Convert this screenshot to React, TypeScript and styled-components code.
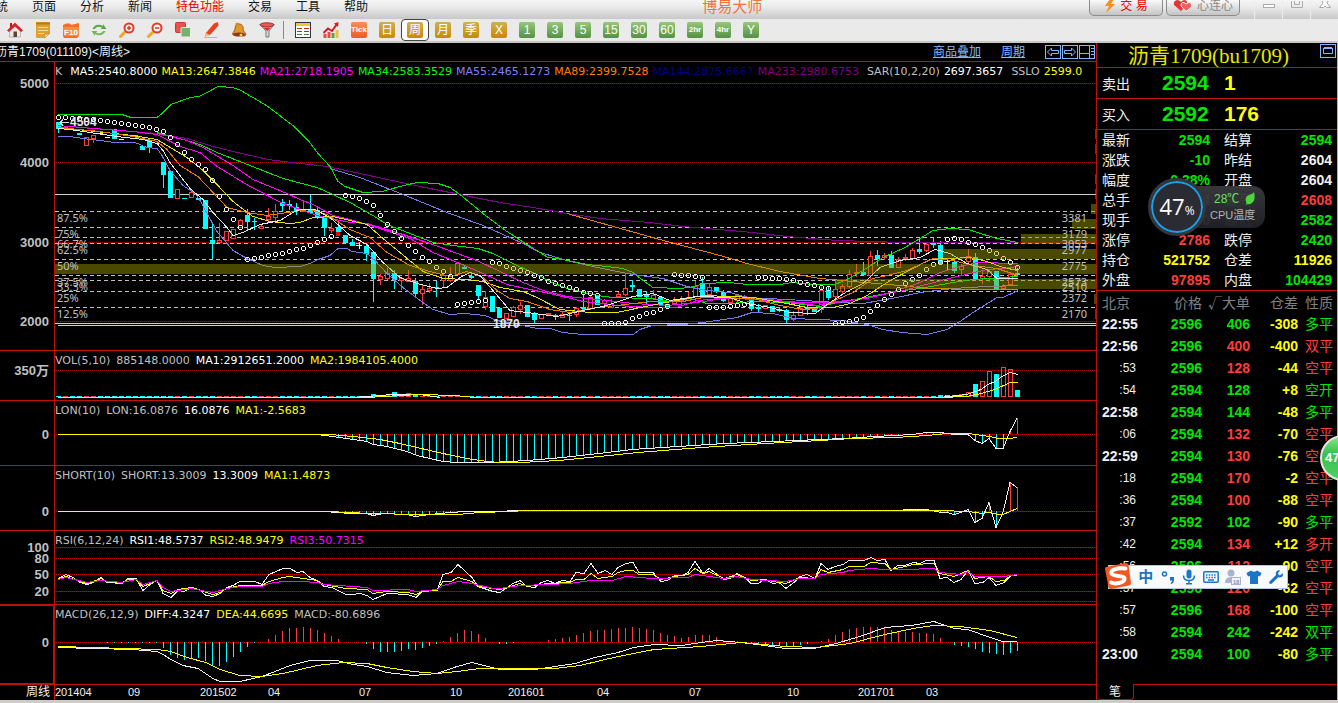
import React from "react";
import styled, { createGlobalStyle, css } from "styled-components";

const RED = "#c01008";
const UP = "#ff3c3c";
const DOWN = "#00ffff";
const GREEN = "#00e600";
const YELLOW = "#ffff00";
const MAGENTA = "#ff00ff";
const GRAY = "#c0c0c0";
const WHITE = "#f0f0f0";
const CJK = '"Noto Sans CJK SC"';

const GlobalStyle = createGlobalStyle`
  * { box-sizing: border-box; }
  body { margin: 0; background: #000; overflow: hidden; }
  button { font: inherit; color: inherit; background: none; border: 0; padding: 0; }
`;

/* ---------- page frame ---------- */

const Page = styled.div`
  display: flex;
  flex-direction: column;
  height: 100vh;
  position: relative;
  overflow: hidden;
  background: #000;
  border-bottom: 3px solid #cfcbc7;
  color: ${WHITE};
  font-family: "Liberation Sans", ${CJK}, sans-serif;
  font-size: 12px;
`;

const MenuBar = styled.header`
  flex: none;
  display: flex;
  height: 19px;
  background: linear-gradient(#f6f6f6, #e9e9e9 40%, #c8c8c8);
  color: #111;
  overflow: hidden;
`;

const Menu = styled.nav`
  display: flex;
  gap: 24px;
  margin-left: -16px;
`;

const MenuItem = styled.button<{ $hot?: boolean }>`
  height: 14px;
  line-height: 14px;
  font-size: 12px;
  white-space: nowrap;
  color: ${(p) => (p.$hot ? "#f00000" : "#111")};
`;

const Brand = styled.h1`
  margin: 0 auto 0 334px;
  font-size: 15px;
  font-weight: 400;
  line-height: 14px;
  color: #f4703c;
`;

const BarButtons = styled.div`
  display: flex;
  gap: 3px;
  margin-right: 14px;
`;

const BarButton = styled.button<{ $tone: string }>`
  display: flex;
  align-items: center;
  justify-content: center;
  gap: 4px;
  width: 74px;
  height: 16px;
  padding-bottom: 4px;
  border: 1px solid #8c8c8c;
  border-top: 0;
  border-radius: 0 0 5px 5px;
  background: linear-gradient(#fafafa, #c4c4c4);
  color: ${(p) => p.$tone};
  font-size: 12px;
  line-height: 12px;
`;

const WindowButtons = styled.div`
  display: flex;
  width: 84px;
  height: 19px;
`;

const WindowButton = styled.button`
  flex: 1;
  padding-bottom: 8px;
  border-left: 1px solid #ececec;
  line-height: 0;
`;

const ToolBar = styled.div`
  flex: none;
  display: flex;
  height: 24px;
  padding-left: 1px;
  background: #eaeaea;
  border-bottom: 2px solid #cbc7c3;
`;

const ToolButton = styled.button<{ $active?: boolean }>`
  display: flex;
  align-items: center;
  justify-content: center;
  width: 28px;
  height: 22px;
  ${(p) =>
    p.$active &&
    css`
      border: 1px solid #444;
      border-radius: 4px;
      background: #fff;
    `}
`;

const ToolDivider = styled.span`
  width: 6px;
  height: 18px;
  margin: 2px 0 0 2px;
  border-left: 1px solid #888;
`;

const Chip = styled.span<{ $tone: "gold" | "green" | "orange" }>`
  width: 16px;
  height: 16px;
  border-radius: 2px;
  color: #fff;
  font-size: 12px;
  line-height: 16px;
  text-align: center;
  white-space: nowrap;
  background: ${(p) =>
    p.$tone === "gold"
      ? "linear-gradient(#d0b050, #cc8800)"
      : p.$tone === "green"
      ? "linear-gradient(#96c878, #549044)"
      : "linear-gradient(#f59058, #ee5a1c)"};
`;

const ChipSmall = styled.span`
  display: block;
  font-size: 8px;
  font-weight: 700;
`;

const Main = styled.main`
  flex: 1;
  min-height: 0;
  display: grid;
  grid-template-columns: minmax(0, 1fr) 242px;
`;

/* ---------- chart side ---------- */

const Charts = styled.section`
  display: grid;
  grid-template-rows:
    18px minmax(0, 289fr) minmax(0, 50fr) minmax(0, 65fr) minmax(0, 65fr)
    minmax(0, 74fr) minmax(0, 80fr) 16px;
  min-width: 0;
`;

const ChartTitle = styled.div`
  display: flex;
  align-items: center;
  height: 18px;
  overflow: hidden;
`;

const Symbol = styled.h2`
  flex: 1;
  margin: 0 0 0 -5px;
  font-size: 12px;
  font-weight: 400;
  line-height: 18px;
  white-space: nowrap;
`;

const TitleLink = styled.a`
  margin-right: 20px;
  color: #80b8ff;
  line-height: 18px;
  text-decoration: underline;
`;

const IconButtons = styled.div`
  display: flex;
  gap: 1px;
  padding-right: 1px;
`;

const IconButton = styled.button`
  width: 16px;
  height: 14px;
  line-height: 0;
`;

const Panel = styled.div`
  display: grid;
  grid-template-columns: 54px minmax(0, 1fr);
  grid-template-rows: minmax(0, 1fr);
  border-top: 1px solid ${RED};
`;

const Axis = styled.div<{ $active?: boolean }>`
  position: relative;
  ${(p) =>
    p.$active &&
    css`
      box-shadow: inset 0 1px ${RED}, inset -1px 0 ${RED}, inset 0 -1px ${RED};
    `}
`;

const AxisLabel = styled.span`
  position: absolute;
  right: 5px;
  height: 16px;
  margin-top: -8px;
  color: ${GRAY};
  font-size: 13px;
  font-weight: 700;
  line-height: 16px;
`;

const Plot = styled.div`
  position: relative;
  border-left: 1px solid ${RED};
  overflow: hidden;
`;

const Canvas = styled.svg`
  position: absolute;
  inset: 0;
  width: 100%;
  height: 100%;
`;

const Legend = styled.div<{ $tight?: boolean }>`
  position: relative;
  display: flex;
  gap: ${(p) => (p.$tight ? 4 : 6)}px;
  height: 20px;
  font-family: "DejaVu Sans", ${CJK}, sans-serif;
  font-size: 11px;
  line-height: 20px;
  white-space: nowrap;
`;

const LegendItem = styled.span<{ $color: string; $wide?: boolean }>`
  color: ${(p) => p.$color};
  margin-right: ${(p) => (p.$wide ? 4 : 0)}px;
`;

const LevelLabel = styled.span<{ $side: "left" | "right" }>`
  position: absolute;
  ${(p) => (p.$side === "left" ? "left: 2px" : "right: 9px")};
  height: 14px;
  margin-top: -7px;
  color: ${GRAY};
  font-family: "Noto Sans", sans-serif;
  font-size: 11px;
  line-height: 14px;
`;

const PriceMark = styled.span`
  position: absolute;
  height: 14px;
  margin-top: -7px;
  font-size: 12px;
  font-weight: 700;
  line-height: 14px;
  color: #e8e8e8;
`;

const TimeRow = styled.div`
  display: grid;
  grid-template-columns: 54px minmax(0, 1fr);
  border-top: 1px solid ${RED};
  line-height: 15px;
`;

const TimeUnit = styled.span`
  padding-right: 4px;
  text-align: right;
`;

const TimeTicks = styled.div`
  position: relative;
  border-left: 1px solid ${RED};
`;

const TimeTick = styled.span`
  position: absolute;
  top: 0;
  font-size: 11px;
`;

/* ---------- quote side ---------- */

const Quote = styled.aside`
  display: flex;
  flex-direction: column;
  border-left: 1px solid ${RED};
  border-right: 1px solid #b8b4b0;
  font-size: 14px;
`;

const QuoteTitle = styled.div`
  display: flex;
  justify-content: flex-end;
  height: 25px;
  padding: 1px 1px 0 0;
  border-bottom: 1px solid ${RED};
`;

const QuoteName = styled.h2`
  flex: 1;
  margin: 0;
  color: #e6e600;
  font-family: "Liberation Serif", ${CJK}, serif;
  font-size: 21px;
  font-weight: 400;
  line-height: 24px;
  text-align: center;
  white-space: nowrap;
`;

const Side = styled.div`
  display: grid;
  grid-template-columns: 60px 62px 1fr;
  align-items: center;
  height: 31px;
  padding-left: 5px;
  border-bottom: 1px solid ${RED};
`;

const Big = styled.span<{ $color: string }>`
  color: ${(p) => p.$color};
  font-size: 21px;
  font-weight: 700;
`;

const QuoteTable = styled.table`
  width: 100%;
  height: 161px;
  table-layout: fixed;
  border-collapse: separate;
  border-spacing: 0;
  border-bottom: 1px solid ${RED};

  tr { height: 20px; }
  th, td { padding: 0; font-size: 14px; line-height: 20px; height: 20px; white-space: nowrap; }
  th { font-weight: 400; text-align: left; }
`;

const Num = styled.td<{ $color: string }>`
  color: ${(p) => p.$color};
  font-weight: 700;
  text-align: right;
`;

const Tape = styled.table`
  width: 100%;
  table-layout: fixed;
  border-collapse: collapse;

  th, td { height: 22px; padding: 0; font-size: 14px; line-height: 22px; text-align: right; white-space: nowrap; }
  th { color: #808080; font-family: ${CJK}, sans-serif; font-weight: 400; }
  th:first-child, td:first-child { padding-left: 5px; }
  th:last-child, td:last-child { padding-right: 4px; }
  th:first-child { text-align: left; }
`;

const TimeCell = styled.td<{ $minor: boolean }>`
  ${(p) =>
    p.$minor
      ? css`
          && { font-size: 12px; padding-right: 2px; }
        `
      : css`
          && { font-weight: 700; text-align: left; }
        `}
`;

const Kind = styled.td<{ $color: string }>`
  color: ${(p) => p.$color};
`;

const Tabs = styled.div`
  display: flex;
  height: 16px;
  margin-top: auto;
`;

const Tab = styled.button`
  width: 37px;
  border: 1px solid ${RED};
  border-width: 0 1px 1px 0;
  border-radius: 0 0 4px 4px;
  font-size: 12px;
  line-height: 14px;
`;

const TabFill = styled.div`
  flex: 1;
  border-top: 1px solid ${RED};
`;

/* ---------- floating widgets ---------- */

const CpuWidget = styled.div`
  position: absolute;
  top: 178px;
  right: 73px;
  display: flex;
  align-items: center;
  width: 117px;
  height: 58px;
`;

const CpuRing = styled.div`
  position: relative;
  display: flex;
  align-items: baseline;
  justify-content: center;
  width: 58px;
  height: 58px;
  border: 3px solid #33363c;
  border-radius: 50%;
  background: #2a2b33;
  box-shadow: inset 0 0 0 2px #1ca0e8;
  color: #fff;
  font-family: "Open Sans", sans-serif;
  font-size: 22px;
  line-height: 50px;
`;

const Percent = styled.span`
  font-size: 12px;
`;

const CpuInfo = styled.div`
  flex: 1;
  height: 42px;
  margin-left: -12px;
  padding: 5px 0 0 16px;
  border-radius: 0 12px 12px 0;
  background: linear-gradient(rgba(58, 58, 62, 0.96), rgba(32, 33, 40, 0.96));
  color: #b4b4b4;
  font-size: 11px;
  line-height: 16px;
  white-space: nowrap;
`;

const Temp = styled.div`
  display: flex;
  align-items: center;
  gap: 6px;
  padding-left: 4px;
  color: #6ce060;
  font-size: 12px;
`;

const Ball = styled.div`
  position: absolute;
  top: 435px;
  right: -28px;
  width: 46px;
  height: 46px;
  padding-left: 3px;
  border: 2px solid #e0e8e0;
  border-radius: 50%;
  background: linear-gradient(#88e488, #38c050 40%, #50d060);
  color: #fff;
  font-size: 13px;
  font-weight: 700;
  line-height: 42px;
`;

const ImeBar = styled.div`
  position: absolute;
  top: 565px;
  right: 50px;
  display: flex;
  align-items: center;
  width: 180px;
  height: 24px;
  padding-left: 26px;
  border: 1px solid #b4c8dc;
  background: #f8fafc;
  color: #1c74c4;
`;

const ImeLogo = styled.svg`
  position: absolute;
  left: -6px;
  top: -5px;
`;

const ImeButton = styled.button`
  width: 22px;
  height: 22px;
  font-size: 15px;
  font-weight: 700;
  line-height: 0;
`;

/* ---------- chart data ---------- */

type Pt = [number, number];
const parse = (s: string): Pt[] => s.trim().split(/\s+/).map((p) => p.split(",").map(Number) as Pt);
const barX = (n: number) => 58 + 7 * n;

const valueAt = (pts: Pt[], x: number) => {
  for (let i = 1; i < pts.length; i++) {
    if (x <= pts[i][0]) {
      const [x0, y0] = pts[i - 1];
      const [x1, y1] = pts[i];
      return y0 + ((y1 - y0) * (x - x0)) / (x1 - x0);
    }
  }
  return pts[pts.length - 1][1];
};

const averages: [string, string][] = [
  ["#800090", "58,125 157,133 187,138 213,146 233,151 268,159 300,163 327,166 360,173 383,178 420,186 460,194 500,202 533,207 567,213 600,218 650,222 683,226 730,230 753,232 787,236 837,240 870,241 903,242 1018,242"],
  ["#7878e8", "330,168 360,177 403,194 447,212 483,225 523,243 540,252 567,260 597,267 633,274 663,278 687,286 707,290 730,292 747,297 787,299 837,302 863,303 897,297 920,292 953,288 987,286 1018,285"],
  ["#7878e8", "58,136 70,136 83,138 100,140 115,142 135,142 147,147 157,148 162,155 170,170 183,185 195,193 200,200 217,231 233,250 247,258 263,265 275,267 300,266 310,263 318,259 330,255 338,248 347,248 352,251 367,253 375,260 387,273 403,287 420,300 433,309 450,314 465,313 485,315 497,320 507,322 523,325 537,328 550,328 563,332 583,334 607,334 633,334 640,329 652,325 683,324 703,322 737,317 752,312 773,313 793,318 817,319 843,320 867,324 883,329 902,332 927,334 947,329 960,321 973,312 997,297 1003,297 1018,290"],
  ["#00e600", "58,114 122,114 131,117 157,117 162,113 171,104 190,97 199,96 207,92 218,86 233,87 241,90 268,106 294,126 309,141 318,153 330,166 338,181 345,186 363,192 382,191 400,186 417,182 438,183 450,187 460,194 483,213 507,231 527,244 548,257 563,259 587,264 607,266 623,268 633,272 643,280 653,287 680,288 695,286 703,283 730,282 747,284 780,284 792,282 813,284 835,284 847,279 863,270 883,257 905,247 920,238 933,230 950,228 968,229 987,235 997,238 1018,242"],
  ["#00e600", "157,132 183,139 200,144 217,152 250,165 283,178 317,187 333,194 350,202 373,215 387,224 410,233 433,242 453,245 478,248 493,253 517,265 537,274 550,281 567,288 597,295 613,297 650,298 670,301 690,298 707,303 730,303 753,301 787,302 820,306 837,302 860,298 897,291 920,288 953,282 973,279 1018,276"],
  ["#e88000", "567,213 617,227 667,241 720,255 747,263 780,271 820,278 853,281 900,285 927,288 973,289 1018,289"],
  ["#ff00ff", "58,125 93,128 133,131 157,134 180,146 200,152 217,166 250,186 283,203 317,215 350,222 367,223 400,233 433,244 460,254 477,260 500,271 523,282 543,290 567,296 597,299 633,303 667,305 697,302 730,297 753,299 803,302 837,302 870,297 907,289 953,277 987,269 1003,268 1018,266"],
  ["#ff00ff", "157,133 187,140 203,147 233,165 253,179 287,193 300,199 313,204 333,215 350,219 377,227 410,238 433,252 460,263 483,273 507,284 530,289 550,293 583,301 617,305 650,307 677,307 697,300 720,298 770,299 817,305 837,301 867,298 897,290 920,282 940,272 960,266 977,262 1018,263"],
  ["#e6e600", "58,127 133,135 157,139 167,145 187,157 203,170 217,184 233,201 253,216 270,221 290,223 300,222 313,217 333,216 350,220 367,224 383,238 400,252 423,271 443,278 467,279 483,281 500,287 523,291 537,297 560,309 590,312 617,312 650,305 677,300 703,295 730,296 753,297 787,303 807,307 833,307 850,303 867,295 887,282 907,271 930,259 970,257 987,261 1003,267 1018,270"],
  ["#f07800", "58,127 100,131 133,136 157,141 167,149 180,165 198,176 213,192 227,207 247,212 267,215 287,212 310,209 327,214 350,229 370,237 387,252 410,265 430,271 450,276 467,271 483,277 497,290 510,298 527,301 550,309 570,312 590,308 617,305 650,301 683,301 703,297 753,298 780,305 803,309 823,307 837,299 853,292 873,278 887,275 907,270 933,258 953,260 973,265 997,268 1018,275"],
  ["#e8e8e8", "58,128 70,129 90,132 117,136 143,139 157,143 163,150 170,162 190,188 203,199 213,212 227,227 233,235 243,232 260,224 280,220 293,212 300,209 315,209 330,217 350,235 367,244 383,262 400,277 417,283 437,288 447,287 460,277 470,272 480,275 493,290 510,310 527,312 557,316 583,310 607,305 633,296 653,293 670,300 697,296 730,297 747,303 770,307 790,312 815,313 830,302 847,291 863,283 880,267 900,260 920,257 935,249 950,253 967,263 987,269 997,278 1018,278"],
];

const sarRuns: [number, number[]][] = [
  [0, [117, 117, 118, 118, 119, 119, 120, 121, 122, 123, 124, 125, 126, 127, 129, 131, 137, 144, 152, 159, 164, 169, 180, 196, 209, 219, 227]],
  [27, [259, 258, 257, 255, 254, 253, 251, 249, 248, 245, 242, 239, 236]],
  [41, [195, 196, 198, 201, 205, 215, 224, 231, 238, 245, 251, 257, 261, 267, 271, 276]],
  [57, [304, 303, 302, 301, 300]],
  [62, [262, 263, 266, 268, 270, 272, 275, 277, 281, 283, 285, 287, 289, 292, 293, 295]],
  [78, [323, 323, 323, 322, 318, 316, 313, 312, 309, 306]],
  [88, [274, 275, 275, 276, 277]],
  [93, [307, 307, 307, 306, 305, 304, 303]],
  [100, [277, 277, 278, 278, 279, 280, 282, 284, 285, 287, 288]],
  [111, [323, 322, 321, 319, 317, 311, 305, 299, 294, 289, 283, 279, 275, 269, 264, 262]],
  [127, [239, 238, 239, 242, 244, 247, 250, 253, 258, 262, 267]],
];

/* index, body top, body bottom, high, low, rising */
type Candle = [number, number, number, number, number, 0 | 1];
const candles: Candle[] = [
  [0, 122, 129, 122, 133, 0], [1, 127, 128, 127, 128, 1], [3, 133, 135, 133, 135, 0], [4, 137, 145, 137, 145, 1],
  [5, 135, 138, 135, 143, 1], [8, 129, 139, 129, 139, 0], [11, 135, 137, 135, 137, 0], [12, 146, 150, 146, 150, 0],
  [13, 140, 148, 140, 153, 0], [15, 162, 175, 162, 188, 0], [16, 171, 198, 171, 198, 0], [17, 189, 198, 189, 199, 1],
  [18, 198, 199, 198, 199, 0], [19, 192, 197, 189, 197, 1], [20, 198, 200, 198, 200, 0], [21, 200, 229, 200, 229, 0],
  [22, 240, 244, 222, 259, 0], [23, 240, 242, 223, 243, 1], [24, 231, 240, 231, 240, 1], [25, 229, 238, 229, 238, 1],
  [26, 220, 227, 219, 228, 1], [27, 215, 222, 209, 231, 0], [28, 221, 222, 218, 230, 0], [29, 226, 228, 224, 229, 1],
  [30, 216, 219, 208, 223, 1], [31, 211, 217, 204, 222, 1], [32, 202, 206, 199, 212, 0], [33, 204, 206, 200, 210, 0],
  [34, 207, 211, 203, 215, 0], [35, 209, 211, 201, 212, 1], [36, 209, 213, 195, 213, 0], [37, 210, 217, 208, 219, 0],
  [38, 217, 228, 217, 236, 0], [39, 228, 230, 223, 233, 1], [40, 227, 232, 223, 234, 0], [41, 235, 243, 235, 243, 0],
  [42, 242, 246, 239, 246, 0], [44, 246, 254, 243, 261, 0], [45, 252, 279, 252, 302, 0], [46, 276, 279, 274, 285, 1],
  [47, 273, 278, 268, 280, 1], [48, 273, 280, 270, 289, 0], [49, 278, 280, 277, 290, 1], [50, 278, 281, 270, 281, 1],
  [51, 281, 294, 278, 296, 0], [52, 289, 293, 284, 305, 1], [53, 288, 290, 283, 293, 1], [54, 287, 288, 281, 297, 0],
  [55, 275, 280, 273, 288, 1], [56, 276, 280, 267, 282, 1], [57, 263, 274, 262, 275, 1], [58, 267, 269, 265, 269, 0],
  [59, 276, 278, 274, 279, 0], [60, 285, 296, 285, 299, 0], [61, 297, 306, 291, 310, 1], [62, 296, 312, 296, 312, 0],
  [63, 308, 318, 308, 318, 0], [64, 313, 318, 313, 319, 1], [65, 307, 316, 306, 317, 1], [66, 305, 309, 302, 314, 1],
  [67, 305, 317, 305, 317, 0], [68, 313, 320, 312, 323, 0], [69, 314, 318, 314, 319, 1], [70, 313, 314, 313, 315, 1],
  [71, 315, 317, 314, 320, 0], [72, 314, 317, 312, 318, 1], [73, 315, 316, 312, 321, 0], [74, 308, 314, 307, 317, 1],
  [75, 307, 309, 295, 312, 0], [76, 297, 308, 295, 310, 1], [77, 295, 305, 295, 305, 0], [78, 300, 303, 299, 303, 1],
  [79, 304, 307, 299, 308, 1], [80, 294, 296, 292, 296, 1], [81, 288, 294, 274, 296, 1], [82, 285, 287, 280, 291, 0],
  [83, 289, 297, 289, 297, 0], [84, 295, 297, 292, 304, 0], [85, 295, 298, 290, 299, 1], [86, 297, 305, 297, 305, 0],
  [87, 304, 308, 304, 308, 0], [88, 300, 303, 297, 304, 1], [89, 300, 301, 296, 304, 1], [90, 297, 300, 292, 301, 1],
  [91, 286, 296, 281, 297, 1], [92, 283, 295, 277, 295, 0], [93, 287, 294, 284, 297, 1], [94, 287, 292, 287, 293, 0],
  [95, 292, 301, 290, 302, 0], [96, 298, 302, 298, 304, 1], [97, 295, 300, 294, 303, 1], [98, 296, 298, 295, 299, 1],
  [99, 297, 309, 297, 311, 0], [100, 307, 309, 304, 313, 0], [101, 305, 308, 305, 309, 1], [102, 306, 312, 306, 312, 0],
  [103, 309, 311, 307, 312, 0], [104, 310, 320, 309, 323, 0], [105, 315, 319, 311, 321, 1], [106, 308, 315, 306, 316, 1],
  [107, 308, 310, 305, 315, 0], [108, 308, 312, 307, 312, 0], [109, 290, 309, 287, 313, 1], [110, 290, 298, 286, 300, 0],
  [111, 289, 296, 280, 300, 1], [112, 286, 291, 284, 295, 1], [113, 274, 286, 270, 288, 1], [114, 272, 273, 264, 277, 1],
  [115, 272, 275, 262, 276, 0], [116, 256, 275, 251, 279, 1], [117, 255, 259, 250, 266, 0], [118, 255, 257, 253, 260, 1],
  [119, 255, 268, 251, 268, 0], [120, 259, 267, 257, 268, 1], [121, 257, 258, 254, 261, 1], [122, 250, 258, 248, 258, 1],
  [123, 249, 252, 238, 254, 0], [124, 244, 250, 242, 252, 1], [125, 243, 245, 237, 248, 0], [126, 245, 264, 241, 265, 0],
  [128, 262, 271, 259, 273, 0], [129, 266, 269, 264, 276, 1], [130, 256, 261, 249, 263, 1], [131, 257, 279, 253, 281, 0],
  [132, 276, 278, 271, 284, 1], [133, 271, 276, 269, 282, 1], [134, 271, 289, 271, 289, 0], [135, 286, 288, 284, 290, 1],
  [136, 274, 284, 273, 285, 1], [137, 273, 275, 268, 275, 0],
];

const bands: Pt[] = [
  [1095, 129], [1095, 144], [1095, 174], [1095, 189], [1091, 204], [1072, 219], [1021, 234], [944, 249],
  [55, 264], [835, 279], [1094, 294], [1095, 309],
];

const levels: [number, string, string][] = [
  [218, "87.5%", "3381"], [234, "75%", "3179"], [244, "66.7%", "3053"], [250, "62.5%", "2977"], [266, "50%", "2775"],
  [282, "37.5%", "2573"], [287, "33.3%", "2510"], [298, "25%", "2372"], [314, "12.5%", "2170"],
];

const lonLine = "58,434 317,434 333,436 353,439 367,441 373,444 387,446 407,451 417,455 430,458 443,461 457,462 490,462 510,461 527,460 563,457 599,453 632,449 678,446 725,443 773,441 820,439 844,438 875,436 913,434 927,432 941,432 954,434 968,434 975,440 982,443 989,438 996,448 1003,448 1010,431 1017,418";
const lonAverage = "58,434 330,434 353,436 380,439 400,443 417,447 443,453 467,458 487,461 500,462 520,462 559,460 599,456 638,452 701,447 765,443 820,440 852,438 895,437 927,435 947,433 968,433 990,436 998,438 1010,438 1017,437";
const shortLine = "58,511 325,511 350,513 367,513 373,515 383,513 407,514 415,516 430,514 450,512 467,511 500,511 515,510 880,510 927,509 941,512 947,512 954,514 961,512 968,509 975,522 982,518 989,502 996,527 1003,512 1010,482 1017,487";
const shortAverage = "58,511 325,511 350,512 367,513 420,514 457,514 480,512 510,511 527,510 940,510 968,511 982,513 989,512 998,514 1003,514 1010,511 1017,508";
const rsi1 = "58,578 66,574 73,577 80,582 87,584 93,582 101,577 107,582 122,583 128,578 136,578 143,590 150,584 157,580 163,593 171,597 178,590 184,591 192,587 199,589 206,595 213,596 220,593 227,587 233,585 240,581 255,581 262,584 269,574 276,571 283,568 290,568 297,572 303,571 310,577 317,580 324,586 332,587 346,594 353,594 360,593 367,595 373,599 387,593 408,594 416,597 422,591 437,590 443,574 451,572 458,564 472,577 478,586 493,591 500,592 513,583 520,580 527,586 535,587 541,582 548,580 555,583 562,580 570,581 576,572 584,573 591,563 598,573 605,570 612,574 618,567 626,563 633,562 639,572 653,572 661,581 667,580 675,575 682,575 688,572 695,561 703,573 709,568 716,573 724,579 730,578 737,573 745,577 751,583 758,583 765,579 773,583 779,582 786,588 794,582 800,576 807,574 815,578 821,563 828,569 835,566 843,564 849,560 864,560 871,557 877,560 885,559 891,570 898,565 905,565 913,562 920,563 926,560 934,560 940,578 947,577 954,582 961,579 968,570 975,583 983,582 989,577 996,585 1004,582 1011,575 1017,574";
const rsi2 = "58,578 66,576 80,581 87,583 101,578 107,581 122,582 128,579 136,579 143,586 150,583 157,580 163,590 171,593 178,589 192,587 206,592 213,594 220,592 227,588 240,585 262,585 269,581 283,577 290,576 303,578 317,580 324,584 346,588 367,589 373,593 387,591 408,592 416,594 422,591 437,590 443,581 451,581 458,577 472,581 478,586 500,589 520,583 527,586 548,583 570,582 576,579 584,579 591,573 598,578 612,576 618,572 626,570 633,570 639,574 653,574 661,579 675,576 688,574 695,568 703,573 709,571 724,578 737,574 751,580 765,579 773,581 786,583 800,577 815,578 821,569 828,572 843,569 849,566 864,566 871,562 885,563 891,569 905,566 913,564 934,563 940,573 954,576 968,570 975,578 989,576 996,581 1004,580 1011,575 1017,575";
const rsi3 = "58,579 66,577 87,582 101,580 122,582 136,579 143,584 157,580 163,587 171,591 192,588 206,591 213,592 227,588 240,586 262,586 269,583 283,581 303,581 317,582 324,584 367,587 373,590 408,589 416,591 437,589 443,585 458,581 472,583 493,588 500,588 520,585 548,584 570,583 584,581 591,580 612,580 626,576 653,578 688,577 695,574 724,578 737,576 751,579 786,581 800,578 815,578 821,574 843,572 849,570 871,568 885,569 905,569 934,568 940,572 961,574 968,571 975,576 1004,576 1017,574";
const diff = "58,647 93,648 133,649 157,651 163,654 171,659 183,665 198,668 213,678 220,681 240,681 262,676 275,671 290,665 310,660 337,660 353,664 367,666 387,672 413,675 437,673 457,666 472,662 500,669 535,669 555,666 575,663 595,657 618,652 634,647 654,644 682,645 701,642 717,640 741,642 757,644 786,648 814,648 836,643 860,636 885,627 911,625 934,621 954,628 968,629 990,637 1003,641 1017,641";
const dea = "58,646 93,647 157,649 171,651 187,657 206,662 220,669 240,675 262,676 283,673 300,669 317,665 343,662 367,663 387,667 413,671 437,673 457,671 480,668 510,668 555,668 580,665 618,656 634,653 654,649 701,646 741,642 786,646 817,647 850,643 885,634 913,628 934,625 960,626 990,630 1017,637";
const macdBars = "58,0 150,-1 157,-1 163,-6 171,-14 178,-16 185,-18 192,-17 199,-16 206,-19 213,-24 220,-24 227,-19 233,-15 240,-10 247,-5 255,-1 262,0 269,4 276,8 283,11 290,14 304,15 317,12 324,9 331,6 338,3 345,0 360,0 367,-2 374,-8 381,-10 395,-10 409,-7 416,-8 430,-4 444,1 451,6 458,10 465,12 472,11 479,8 486,3 493,0 500,-2 507,-2 520,0 541,0 555,3 570,5 591,11 612,13 633,15 653,12 661,8 682,4 695,7 709,7 724,2 745,0 760,-3 794,-4 801,-3 815,0 828,3 836,7 850,13 864,15 885,15 891,12 905,10 934,8 941,3 947,0 954,-3 968,-5 982,-10 1003,-13 1017,-9";

const volumes: Record<number, number> = {
  45: 394, 46: 395, 47: 395, 48: 392, 49: 395, 50: 393, 51: 395, 126: 395, 127: 395, 128: 395, 129: 394, 130: 392,
  131: 384, 132: 381, 133: 371, 134: 374, 135: 367, 136: 369, 137: 390,
};

const ticks: [number, string][] = [
  [55, "201404"], [128, "09"], [200, "201502"], [268, "04"], [359, "07"], [450, "10"], [508, "201601"],
  [597, "04"], [689, "07"], [787, "10"], [858, "201701"], [926, "03"],
];

/* ---------- chart parts ---------- */

const Line = ({ pts, color }: { pts: string; color: string }) => (
  <polyline points={pts} fill="none" stroke={color} strokeWidth={1} transform="translate(0 .5)" />
);

const Dots = ({ y, color = "#c00000" }: { y: number; color?: string }) => (
  <line x1={56} x2={1096} y1={y + 0.5} y2={y + 0.5} stroke={color} strokeDasharray="1 1" />
);

const Stems = ({ pts, base, from = 0 }: { pts: string; base: number; from?: number }) => {
  const curve = parse(pts);
  return (
    <>
      {Array.from({ length: 138 - from }, (_, i) => {
        const x = barX(i + from);
        const y = Math.round(valueAt(curve, x));
        if (y === base) return null;
        return <rect key={x} x={x} y={Math.min(y, base)} width={1} height={Math.abs(y - base)} fill={y > base ? DOWN : UP} />;
      })}
    </>
  );
};

interface PanelProps {
  top: number;
  height: number;
  labels: [number, string][];
  legend: [string, string, boolean?][];
  active?: boolean;
  tight?: boolean;
  extra?: React.ReactNode;
  children: React.ReactNode;
}

const pct = (y: number, top: number, height: number) => `${((y - top) / height) * 100}%`;

const ChartPanel = ({ top, height, labels, legend, active, tight, extra, children }: PanelProps) => (
  <Panel>
    <Axis $active={active}>
      {labels.map(([y, text]) => (
        <AxisLabel key={text} style={{ top: pct(y, top, height) }}>{text}</AxisLabel>
      ))}
    </Axis>
    <Plot>
      <Canvas viewBox={`55 ${top} 1041 ${height}`} preserveAspectRatio="none" shapeRendering="crispEdges" aria-hidden="true">
        {children}
      </Canvas>
      {extra}
      <Legend $tight={tight}>
        {legend.map(([text, color, wide]) => (
          <LegendItem key={text} $color={color} $wide={wide}>{text}</LegendItem>
        ))}
      </Legend>
    </Plot>
  </Panel>
);

const PriceDrawing = () => (
  <>
    {[83, 162, 242, 321].map((y) => <Dots key={y} y={y} color="#a00000" />)}
    {[211, 227, 237, 243, 259, 275, 280, 291, 307].map((y) => (
      <line key={y} x1={55} x2={1096} y1={y + 0.5} y2={y + 0.5} stroke={GRAY} strokeDasharray="4 3" />
    ))}
    {[194, 323, 325].map((y) => (
      <rect key={y} x={y === 325 ? 58 : 55} y={y} width={1041} height={1} fill="#d0d0d0" />
    ))}
    {candles.map(([n, t, b, hi, lo, up]) => {
      const x = barX(n);
      return up ? (
        <g key={n}>
          <path d={`M${x + 0.5} ${hi}V${t}M${x + 0.5} ${b}V${lo}`} stroke={UP} />
          <rect x={x - 1.5} y={t + 0.5} width={4} height={Math.max(b - t, 1)} fill="#000" stroke={UP} />
        </g>
      ) : (
        <g key={n} fill={DOWN}>
          <rect x={x - 2} y={t} width={5} height={Math.max(b - t, 1)} />
          <rect x={x} y={hi} width={1} height={lo - hi} />
        </g>
      );
    })}
    <path d="M98 133.5h5M105 137.5h5M119 139.5h5M155 143.5h5M356 245.5h6M359.500 242v7M944 261.500h6M947.500 258v12" stroke={WHITE} />
    {averages.map(([color, pts], i) => <Line key={i} pts={pts} color={color} />)}
    <g fill="none" stroke="#fff">
      {sarRuns.flatMap(([start, ys]) =>
        ys.map((y, i) => (
          <path key={start + i} d={`M${barX(start + i) - 1} ${y - 1.5}h3m.5 .500v3m-.5 .5h-3m-.5 -.500v-3`} />
        ))
      )}
    </g>
    <rect x={336} y={232} width={4} height={4} fill="#f00" />
    {bands.map(([x, y]) => (
      <rect key={y} x={x} y={y} width={1096 - x} height={10} fill="#a0a000" fillOpacity={0.46} />
    ))}
    <path d="M60 122.500h9M63 119.500l-3 3l3 3" fill="none" stroke="#ddd" />
  </>
);

const rising = new Set(candles.filter((c) => c[5]).map((c) => c[0]));

const VolumeDrawing = () => (
  <>
    <Dots y={370} color="#a00000" />
    {Array.from({ length: 138 }, (_, n) => {
      const x = barX(n) - 2;
      const y = volumes[n] ?? 396;
      return y < 393 && rising.has(n) ? (
        <rect key={n} x={x + 0.5} y={y + 0.5} width={4} height={396 - y} fill="none" stroke={UP} />
      ) : (
        <rect key={n} x={x} y={y} width={5} height={397 - y} fill={rising.has(n) ? UP : DOWN} />
      );
    })}
    <Line color={WHITE} pts="352,397 380,395 393,394 420,394 440,397" />
    <Line color={WHITE} pts="939,397 967,394 981,389 988,384 995,381 1002,376 1010,372 1018,374" />
    <Line color={YELLOW} pts="58,397 367,397 400,395 420,394 455,395 475,397 939,397 967,396 981,393 995,389 1010,382 1018,382" />
  </>
);

/* ---------- toolbar icons ---------- */

const Ico = ({ children }: { children: React.ReactNode }) => (
  <svg width={16} height={16} viewBox="0 0 16 16" aria-hidden="true">{children}</svg>
);

const lens = (
  <>
    <path d="M1.500 14.500l4.500-4.500" stroke="#f0a820" strokeWidth={3} strokeLinecap="round" />
    <circle cx={10} cy={6} r={4.500} fill="#fff4f0" stroke="#e03c28" strokeWidth={2} />
  </>
);

const tools: [string, React.ReactNode][] = [
  ["首页", <Ico><path d="M2.500 8v7h11V8L8 3z" fill="#eee6e0" stroke="#999" strokeWidth={0.6} /><path d="M0 8.500L8 .5l8 8-2 1.500-6-5.500-6 5.500z" fill="#d82028" /><path d="M3 1h2v3L3 6z" fill="#b01820" /><path d="M6.500 15V9.500h3.500V15z" fill="#5c4438" /></Ico>],
  ["记事", <Ico><path d="M2 0h12a1 1 0 011 1v10l-5 5H2a1 1 0 01-1-1V1a1 1 0 011-1z" fill="#e0a030" /><path d="M1 1.500h14" stroke="#b87818" strokeWidth={2} /><path d="M3 5.500h10M3 8.500h10M3 11.500h6" stroke="#f8dc98" /><path d="M15 11l-5 5v-4q3 1 5-1" fill="#f8ecd0" stroke="#a87830" strokeWidth={0.5} /></Ico>],
  ["F10资料", <Ico><path d="M0 3l3-1.500h4L8 3l8-2v13l-2 2H1l-1-2z" fill="#f07028" /><path d="M0 5h16v9H1z" fill="#f49040" /><text x={8} y={13} textAnchor="middle" fontFamily="Liberation Sans" fontWeight={700} fontSize={8} fill="#fff">F10</text></Ico>],
  ["刷新", <Ico><path d="M1.500 7C3 3 8 1.500 12 4V2l3.500 5H9.500l1.500-1.500C8.500 4 5 4.500 4 7z" fill="#58a840" /><path d="M14.500 9C13 13 8 14.500 4 12v2L.5 9h6L5 10.500C7.500 12 11 11.500 12 9z" fill="#70b858" /></Ico>],
  ["放大", <Ico>{lens}<path d="M8 6h4M10 4v4" stroke="#e03020" strokeWidth={1.500} /></Ico>],
  ["缩小", <Ico>{lens}<path d="M8 6h4" stroke="#e03020" strokeWidth={1.500} /></Ico>],
  ["叠加", <Ico><rect x={0.5} y={0.5} width={10} height={10} rx={1} fill="#e85048" stroke="#c83830" /><rect x={6} y={5.500} width={9.500} height={9.500} rx={1} fill="#78b070" stroke="#e8f0e0" /></Ico>],
  ["画线", <Ico><path d="M3 11L11 1.500 15 0l.5 3.500L7 13l-5 1.500z" fill="#e84020" /><path d="M3 11l4 2-5 1.500z" fill="#f0c080" /><path d="M1 15.500h13" stroke="#f0a080" /></Ico>],
  ["预警", <Ico><path d="M6 2c5-1 7 3 6 6l3 4-1 2L2 13l-.5-2C5 9 3 4 6 2z" fill="#e09828" stroke="#884818" strokeWidth={0.8} /><ellipse cx={8} cy={12.500} rx={6} ry={2} fill="#8c3818" /><circle cx={6} cy={2} r={1.500} fill="#d88820" /><circle cx={10} cy={13} r={1.500} fill="#f0c850" /></Ico>],
  ["筛选", <Ico><path d="M1 2.500h14L10 9v6H7V9z" fill="#d8d8d8" stroke="#777" /><ellipse cx={8} cy={2.800} rx={7} ry={2} fill="#f05858" stroke="#a03030" /><path d="M4 5.500h8L8.500 9z" fill="#e02828" /></Ico>],
];

const views: [string, React.ReactNode][] = [
  ["报价", <Ico><rect x={0.5} y={0.5} width={15} height={15} fill="#fff" stroke="#334" /><path d="M1 2.500h14" stroke="#f0c828" strokeWidth={3} /><path d="M2 6.500h5M9 6.500h5" stroke="#c03030" /><path d="M2 9.500h5M9 9.500h5" stroke="#305890" /><path d="M2 12.500h5M9 12.500h5" stroke="#308830" /></Ico>],
  ["走势", <Ico><path d="M2 12v4M6 10v6" stroke="#e05040" strokeWidth={3} /><path d="M10 11v5" stroke="#58a040" strokeWidth={3} /><path d="M14 8v8" stroke="#f0c040" strokeWidth={3} /><path d="M.5 11L5 6.500 9 9l5-7" fill="none" stroke="#d81820" strokeWidth={2} /><path d="M11 1.500L15.500 0 15 5z" fill="#d81820" /></Ico>],
  ["Tick", <Chip $tone="orange"><ChipSmall>Tick</ChipSmall></Chip>],
];

const periods: [string, "gold" | "green"][] = [
  ["日", "gold"], ["周", "gold"], ["月", "gold"], ["季", "gold"], ["X", "gold"], ["1", "green"], ["3", "green"],
  ["5", "green"], ["15", "green"], ["30", "green"], ["60", "green"], ["2hr", "green"], ["4hr", "green"], ["Y", "green"],
];

const Frame = ({ d }: { d: string }) => (
  <svg width={16} height={14} viewBox="0 0 16 14" fill="none" stroke="#80b8ff" aria-hidden="true">
    <rect x={0.5} y={0.5} width={15} height={13} />
    <path d={d} />
  </svg>
);

/* ---------- quote data ---------- */

type Cell = [string, string, string];
const quotes: [Cell, Cell][] = [
  [["最新", "2594", GREEN], ["结算", "2594", GREEN]],
  [["涨跌", "-10", GREEN], ["昨结", "2604", WHITE]],
  [["幅度", "-0.38%", GREEN], ["开盘", "2604", WHITE]],
  [["总手", "203324", YELLOW], ["最高", "2608", UP]],
  [["现手", "100", YELLOW], ["最低", "2582", GREEN]],
  [["涨停", "2786", UP], ["跌停", "2420", GREEN]],
  [["持仓", "521752", YELLOW], ["仓差", "11926", YELLOW]],
  [["外盘", "97895", UP], ["内盘", "104429", GREEN]],
];

const trades: [string, string, string, string, string, boolean][] = [
  ["22:55", "2596", "406", "-308", "多平", false],
  ["22:56", "2596", "400", "-400", "双平", true],
  [":53", "2596", "128", "-44", "空平", true],
  [":54", "2594", "128", "+8", "空开", false],
  ["22:58", "2594", "144", "-48", "多平", false],
  [":06", "2594", "132", "-70", "空平", true],
  ["22:59", "2594", "130", "-76", "空平", true],
  [":18", "2594", "170", "-2", "空平", true],
  [":36", "2594", "100", "-88", "空平", true],
  [":37", "2592", "102", "-90", "多平", false],
  [":42", "2594", "134", "+12", "多开", true],
  [":56", "2596", "112", "-90", "空平", true],
  [":57", "2596", "120", "-62", "空平", true],
  [":57", "2596", "168", "-100", "空平", true],
  [":58", "2594", "242", "-242", "双平", false],
  ["23:00", "2594", "100", "-80", "多平", false],
];

const QuotePanel = () => (
  <Quote>
    <QuoteTitle>
      <QuoteName>沥青1709(bu1709)</QuoteName>
      <IconButton aria-label="还原"><Frame d="M4 4.500h8M3.500 4v5.500h9V4M4 3.500h8" /></IconButton>
    </QuoteTitle>
    <Side><span>卖出</span><Big $color={GREEN}>2594</Big><Big $color={YELLOW}>1</Big></Side>
    <Side><span>买入</span><Big $color={GREEN}>2592</Big><Big $color={YELLOW}>176</Big></Side>
    <QuoteTable>
      <colgroup><col width={5} /><col width={40} /><col width={68} /><col width={14} /><col width={40} /><col /><col width={5} /></colgroup>
      <tbody>
        {quotes.map(([a, b]) => (
          <tr key={a[0]}>
            <td />
            <th scope="row">{a[0]}</th><Num $color={a[2]}>{a[1]}</Num>
            <td />
            <th scope="row">{b[0]}</th><Num $color={b[2]}>{b[1]}</Num>
            <td />
          </tr>
        ))}
      </tbody>
    </QuoteTable>
    <Tape>
      <colgroup><col width={41} /><col width={64} /><col width={48} /><col width={48} /><col /></colgroup>
      <thead><tr><th>北京</th><th>价格</th><th>√大单</th><th>仓差</th><th>性质</th></tr></thead>
      <tbody>
        {trades.map(([time, price, lots, delta, kind, sell], i) => (
          <tr key={i}>
            <TimeCell $minor={time.startsWith(":")}>{time}</TimeCell>
            <Num $color={GREEN}>{price}</Num>
            <Num $color={sell ? UP : GREEN}>{lots}</Num>
            <Num $color={YELLOW}>{delta}</Num>
            <Kind $color={sell ? UP : GREEN}>{kind}</Kind>
          </tr>
        ))}
      </tbody>
    </Tape>
    <Tabs><Tab>笔</Tab><TabFill /></Tabs>
  </Quote>
);

const imeIcons: [string, React.ReactNode][] = [
  ["标点", <svg width={16} height={16} viewBox="0 0 16 16"><circle cx={4.500} cy={5} r={2} fill="none" stroke="#1c74c4" strokeWidth={1.500} /><path d="M10 8h4v3q0 3-3 4l-.5-1q1.500-1 1.500-2.500h-2z" fill="#1c74c4" /></svg>],
  ["语音", <svg width={16} height={16} viewBox="0 0 16 16"><rect x={5.500} y={0.5} width={5} height={9} rx={2.500} fill="#1c74c4" /><path d="M2.500 6.500q0 5 5.500 5t5.500-5M8 11.500v3M5 14.800h6" fill="none" stroke="#1c74c4" strokeWidth={1.500} /></svg>],
  ["键盘", <svg width={16} height={14} viewBox="0 0 16 14"><rect x={0.800} y={1.800} width={14.400} height={10.400} rx={1} fill="none" stroke="#1c74c4" strokeWidth={1.500} /><path d="M3 5h10M3 7.500h10" stroke="#1c74c4" strokeWidth={1.500} strokeDasharray="1.500 1.200" /><path d="M5 10h6" stroke="#1c74c4" strokeWidth={1.500} /></svg>],
  ["账号", <svg width={18} height={16} viewBox="0 0 18 16"><circle cx={7} cy={4} r={3.500} fill="#a8b4cc" /><path d="M1 14q0-6 6-6t6 6z" fill="#a8b4cc" /><rect x={7.500} y={8.500} width={9} height={7} fill="#f4f4f8" stroke="#a8b4cc" /><text x={12} y={14.500} textAnchor="middle" fontSize={6} fontFamily="Liberation Sans" fill="#8894b0">18</text></svg>],
  ["皮肤", <svg width={16} height={16} viewBox="0 0 16 16"><path d="M5 1.500q3 2.500 6 0L15.500 4 14 7.500l-2-.5v8H4V7l-2 .5L.5 4z" fill="#1c74c4" /></svg>],
  ["工具", <svg width={16} height={16} viewBox="0 0 16 16"><path d="M14.800 4.200l-3 2.300-2-2 2.300-3C9.500.5 7 3 8 6L1.500 12.500q-.8 1.500.5 2.200 1 .5 1.800-.2L10.300 8.200c3 .9 5.500-1.300 4.500-4z" fill="#1c74c4" /></svg>],
];

export default function App() {
  return (
    <Page>
      <GlobalStyle />
      <MenuBar>
        <Menu>
          {["系统", "页面", "分析", "新闻", "特色功能", "交易", "工具", "帮助"].map((m) => (
            <MenuItem key={m} $hot={m === "特色功能"}>{m}</MenuItem>
          ))}
        </Menu>
        <Brand>博易大师</Brand>
        <BarButtons>
          <BarButton $tone="#f00000">
            <svg width={12} height={14} viewBox="0 0 12 14"><path d="M6 0L1 7h4l-3 7 9-9H7l3-5z" fill="#f89018" /></svg>
            交 易
          </BarButton>
          <BarButton $tone="#888">
            <svg width={20} height={12} viewBox="0 0 20 12"><path d="M8 11L1 5q-1-4 3-5 3 0 4 2 1-2 4-2 3 1 2 5z" fill="#e03838" /><path d="M13 11.500L8 6q0-4 3-3.500l2 1.500q3-3 5.500-.5 1 3-1 4.500z" fill="#f06060" stroke="#fff" /></svg>
            心连心
          </BarButton>
        </BarButtons>
        <WindowButtons>
          <WindowButton aria-label="最小化"><svg width={12} height={10} viewBox="0 0 12 10"><rect x={0.5} y={3.500} width={11} height={3} fill="#fff" stroke="#aaa" /></svg></WindowButton>
          <WindowButton aria-label="最大化"><svg width={12} height={10} viewBox="0 0 12 10"><path d="M.5 0v6.500h11V0M3.500 0v3.500h5V0" fill="none" stroke="#aaa" /></svg></WindowButton>
          <WindowButton aria-label="关闭"><svg width={12} height={10} viewBox="0 0 12 10"><path d="M3 0l1 2L.5 6.500h4L6 5l1.500 1.500h4L8 2l1-2" fill="#f8f8f8" stroke="#aaa" /></svg></WindowButton>
        </WindowButtons>
      </MenuBar>
      <ToolBar>
        {tools.map(([label, icon]) => <ToolButton key={label} aria-label={label}>{icon}</ToolButton>)}
        <ToolDivider />
        {views.map(([label, icon]) => <ToolButton key={label} aria-label={label}>{icon}</ToolButton>)}
        {periods.map(([label, tone]) => (
          <ToolButton key={label} $active={label === "周"}>
            <Chip $tone={tone}>{label.length > 2 ? <ChipSmall>{label}</ChipSmall> : label}</Chip>
          </ToolButton>
        ))}
      </ToolBar>
      <Main>
        <Charts>
          <ChartTitle>
            <Symbol>沥青1709(011109)&lt;周线&gt;</Symbol>
            <TitleLink href="#overlay">商品叠加</TitleLink>
            <TitleLink href="#period">周期</TitleLink>
            <IconButtons>
              <IconButton aria-label="上一个"><Frame d="M2.500 7l4-4v2.500h7v3h-7V11z" /></IconButton>
              <IconButton aria-label="下一个"><Frame d="M13.500 7l-4-4v2.500h-7v3h7V11z" /></IconButton>
              <IconButton aria-label="布局"><Frame d="M10.500 1v12M1 8.500h9M12 3.500h3M12 6.500h3M12 9.500h3" /></IconButton>
            </IconButtons>
          </ChartTitle>
          <ChartPanel
            tight
            top={62}
            height={288}
            labels={[[84, "5000"], [163, "4000"], [243, "3000"], [322, "2000"]]}
            legend={[
              ["K", GRAY, true], ["MA5:2540.8000", "#fff"], ["MA13:2647.3846", YELLOW], ["MA21:2718.1905", MAGENTA],
              ["MA34:2583.3529", "#00ff00"], ["MA55:2465.1273", "#8080ff"], ["MA89:2399.7528", "#ff8000"],
              ["MA144:2875.6667", "#000080"], ["MA233:2980.6753", "#800080", true], ["SAR(10,2,20)", GRAY],
              ["2697.3657", "#fff", true], ["SSLO", GRAY], ["2599.0", YELLOW],
            ]}
            extra={
              <>
                {levels.map(([y, share, price]) => (
                  <React.Fragment key={price}>
                    <LevelLabel $side="left" style={{ top: pct(y, 62, 288) }}>{share}</LevelLabel>
                    <LevelLabel $side="right" style={{ top: pct(y, 62, 288) }}>{price}</LevelLabel>
                  </React.Fragment>
                ))}
                <PriceMark style={{ top: pct(122, 62, 288), left: pct(70, 55, 1041) }}>4504</PriceMark>
                <PriceMark style={{ top: pct(324, 62, 288), left: pct(493, 55, 1041) }}>1870</PriceMark>
              </>
            }
          >
            <PriceDrawing />
          </ChartPanel>
          <ChartPanel top={351} height={49} labels={[[371, "350万"]]} legend={[["VOL(5,10)", GRAY], ["885148.0000", GRAY], ["MA1:2912651.2000", "#fff"], ["MA2:1984105.4000", YELLOW]]}>
            <VolumeDrawing />
          </ChartPanel>
          <ChartPanel top={401} height={64} labels={[[435, "0"]]} legend={[["LON(10)", GRAY], ["LON:16.0876", GRAY], ["16.0876", "#fff"], ["MA1:-2.5683", YELLOW]]}>
            <Dots y={434} />
            <Stems pts={lonLine} base={434} from={40} />
            <Line pts={lonLine} color={WHITE} />
            <Line pts={lonAverage} color={YELLOW} />
          </ChartPanel>
          <ChartPanel top={466} height={64} labels={[[512, "0"]]} legend={[["SHORT(10)", GRAY], ["SHORT:13.3009", GRAY], ["13.3009", "#fff"], ["MA1:1.4873", YELLOW]]}>
            <Dots y={511} />
            <Stems pts={shortLine} base={511} from={40} />
            <Line pts={shortLine} color={WHITE} />
            <Line pts={shortAverage} color={YELLOW} />
          </ChartPanel>
          <ChartPanel
            top={531}
            height={73}
            labels={[[548, "100"], [559, "80"], [575, "50"], [592, "20"]]}
            legend={[["RSI(6,12,24)", GRAY], ["RSI1:48.5737", "#fff"], ["RSI2:48.9479", YELLOW], ["RSI3:50.7315", MAGENTA]]}
          >
            {[547, 558, 574, 591, 601].map((y) => <Dots key={y} y={y} />)}
            <Line pts={rsi1} color={WHITE} />
            <Line pts={rsi2} color={YELLOW} />
            <Line pts={rsi3} color={MAGENTA} />
          </ChartPanel>
          <ChartPanel active top={605} height={79} labels={[[643, "0"]]} legend={[["MACD(26,12,9)", GRAY], ["DIFF:4.3247", "#fff"], ["DEA:44.6695", YELLOW], ["MACD:-80.6896", GRAY]]}>
            <Dots y={642} />
            {Array.from({ length: 138 }, (_, n) => {
              const v = Math.round(valueAt(parse(macdBars), barX(n)));
              return v === 0 ? null : (
                <rect key={n} x={barX(n)} y={v > 0 ? 642 - v : 642} width={1} height={Math.abs(v)} fill={v > 0 ? UP : DOWN} />
              );
            })}
            <Line pts={diff} color={WHITE} />
            <Line pts={dea} color={YELLOW} />
          </ChartPanel>
          <TimeRow>
            <TimeUnit>周线</TimeUnit>
            <TimeTicks>
              {ticks.map(([x, text]) => <TimeTick key={x} style={{ left: pct(x, 55, 1041) }}>{text}</TimeTick>)}
            </TimeTicks>
          </TimeRow>
        </Charts>
        <QuotePanel />
      </Main>
      <CpuWidget>
        <CpuRing>47<Percent>%</Percent></CpuRing>
        <CpuInfo>
          <Temp>
            28℃
            <svg width={10} height={14} viewBox="0 0 10 14"><path d="M9 0q2 8-2 11-3 2-5 1l-1 2 .5-3Q-1 5 4 3 8 2 9 0z" fill="#48d838" /></svg>
          </Temp>
          CPU温度
        </CpuInfo>
      </CpuWidget>
      <Ball>47</Ball>
      <ImeBar>
        <ImeLogo width={30} height={30} viewBox="0 0 30 30" aria-hidden="true">
          <path d="M3 6L23 2q2 0 2.500 2L28 22q0 2-2 2.500L8 28q-2 0-2.500-2L2 8q0-2 1-2z" fill="#f05820" />
          <path d="M22.500 7.500C14 6.500 7 9 8.500 12.500S22 14 21.500 18 12 23.500 8 21.500" fill="none" stroke="#fff" strokeWidth={4} strokeLinecap="round" />
        </ImeLogo>
        <ImeButton>中</ImeButton>
        {imeIcons.map(([label, icon]) => <ImeButton key={label} aria-label={label}>{icon}</ImeButton>)}
      </ImeBar>
    </Page>
  );
}
